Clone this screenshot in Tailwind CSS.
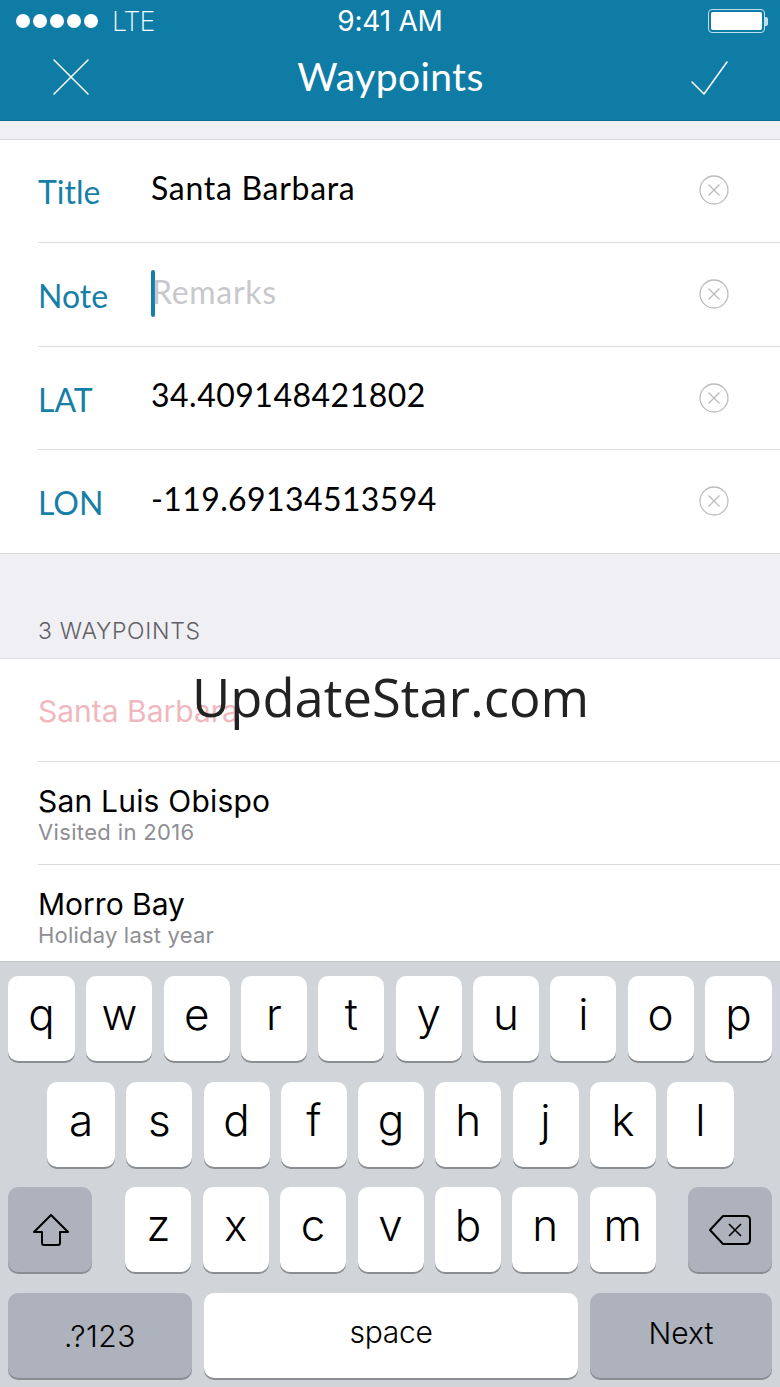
<!DOCTYPE html>
<html>
<head>
<meta charset="utf-8">
<script src="https://cdn.jsdelivr.net/npm/@tailwindcss/browser@4"></script>
</head>
<body class="m-0">
<div class="relative w-[780px] h-[1387px] overflow-hidden flex flex-col bg-[#efeff4] font-['Lato',sans-serif]">
  <!-- header -->
  <header class="h-[121px] shrink-0 bg-[#0f7ca6] text-white flex flex-col border-b border-[#0c6f96]">
    <div class="h-[42px] relative flex items-center justify-between pl-[16px] pr-[12px] font-['Inter',sans-serif]">
      <div class="flex items-center gap-[3px]">
        <span class="w-[14px] h-[14px] rounded-full bg-white"></span>
        <span class="w-[14px] h-[14px] rounded-full bg-white"></span>
        <span class="w-[14px] h-[14px] rounded-full bg-white"></span>
        <span class="w-[14px] h-[14px] rounded-full bg-white"></span>
        <span class="w-[14px] h-[14px] rounded-full bg-white"></span>
        <span class="ml-[11px] text-[27px] font-extralight leading-none tracking-[-1px]">LTE</span>
      </div>
      <span class="absolute left-0 right-0 text-center text-[28px] font-normal leading-none tracking-[-0.2px]">9:41 AM</span>
      <div class="flex items-center">
        <div class="w-[57px] h-[24px] rounded-[4px] border border-[#bfe0ee] p-[2px]"><div class="w-full h-full rounded-[2px] bg-white"></div></div>
        <div class="w-[3px] h-[9px] rounded-r-[2px] bg-[#bfe0ee]"></div>
      </div>
    </div>
    <div class="flex-1 flex items-center justify-between pl-[52px] pr-[51px] pb-[9px]">
      <svg class="w-[38px] h-[38px]" viewBox="0 0 38 38" fill="none" stroke="white" stroke-width="1.5" stroke-linecap="round"><path d="M2 2 L36 36 M36 2 L2 36"/></svg>
      <span class="text-[39px] leading-none font-['Lato',sans-serif] tracking-[0.4px]">Waypoints</span>
      <svg class="w-[38px] h-[36px] mt-[4px]" viewBox="0 0 38 36" fill="none" stroke="white" stroke-width="1.5" stroke-linecap="round" stroke-linejoin="round"><path d="M1 21 L13 33 L36 1"/></svg>
    </div>
  </header>

  <div class="h-[18px] shrink-0"></div>

  <!-- form -->
  <section class="shrink-0 bg-white border-y border-[#d9d9dc] pl-[38px]">
    <div class="h-[103px] flex items-center border-b border-[#dcdcdf] pr-[51px]">
      <span class="w-[113px] text-[32px] text-[#167fa8] leading-none pt-[1px]">Title</span>
      <span class="flex-1 text-[32px] text-black leading-none pb-[7px] tracking-[0.7px]">Santa Barbara</span>
      <svg class="w-[30px] h-[30px] mb-[2px]" viewBox="0 0 30 30" fill="none" stroke="#bcbcbc" stroke-width="1.3"><circle cx="15" cy="15" r="14"/><path d="M9.5 9.5 L20.5 20.5 M20.5 9.5 L9.5 20.5"/></svg>
    </div>
    <div class="h-[104px] flex items-center border-b border-[#dcdcdf] pr-[51px]">
      <span class="w-[113px] text-[32px] text-[#167fa8] leading-none pt-[3px]">Note</span>
      <span class="w-[4px] h-[47px] mt-[-3px] rounded-full bg-[#167fa8]"></span>
      <span class="flex-1 text-[32px] text-[#c8c8cc] leading-none pb-[5px] ml-[-3px] tracking-[0.7px]">Remarks</span>
      <svg class="w-[30px] h-[30px] mb-[2px]" viewBox="0 0 30 30" fill="none" stroke="#bcbcbc" stroke-width="1.3"><circle cx="15" cy="15" r="14"/><path d="M9.5 9.5 L20.5 20.5 M20.5 9.5 L9.5 20.5"/></svg>
    </div>
    <div class="h-[103px] flex items-center border-b border-[#dcdcdf] pr-[51px]">
      <span class="w-[113px] text-[32px] text-[#167fa8] leading-none pt-[3px]">LAT</span>
      <span class="flex-1 text-[32px] text-black leading-none pb-[6px] tracking-[0.5px]">34.409148421802</span>
      <svg class="w-[30px] h-[30px] mb-[1px]" viewBox="0 0 30 30" fill="none" stroke="#bcbcbc" stroke-width="1.3"><circle cx="15" cy="15" r="14"/><path d="M9.5 9.5 L20.5 20.5 M20.5 9.5 L9.5 20.5"/></svg>
    </div>
    <div class="h-[103px] flex items-center pr-[51px]">
      <span class="w-[113px] text-[32px] text-[#167fa8] leading-none pt-[3px]">LON</span>
      <span class="flex-1 text-[32px] text-black leading-none pb-[5px] tracking-[0.4px]">-119.69134513594</span>
      <svg class="w-[30px] h-[30px] mb-[1px]" viewBox="0 0 30 30" fill="none" stroke="#bcbcbc" stroke-width="1.3"><circle cx="15" cy="15" r="14"/><path d="M9.5 9.5 L20.5 20.5 M20.5 9.5 L9.5 20.5"/></svg>
    </div>
  </section>

  <!-- section label -->
  <div class="h-[104px] shrink-0 flex items-end pl-[38px] pb-[15px] font-['Inter',sans-serif] font-light text-[23px] leading-none tracking-[0.7px] text-[#5f5f65]">3 WAYPOINTS</div>

  <!-- list -->
  <section class="flex-1 bg-white border-t border-[#dcdcdf] pl-[38px] font-['Inter',sans-serif]">
    <div class="h-[103px] flex items-center border-b border-[#dcdcdf]">
      <span class="text-[30px] leading-none text-[#f0b7c0] pt-[2px]">Santa Barbara</span>
    </div>
    <div class="h-[103px] flex flex-col justify-center border-b border-[#dcdcdf] pt-[1px]">
      <span class="text-[30px] leading-[36px] text-black tracking-[0.2px]">San Luis Obispo</span>
      <span class="text-[22px] leading-[26px] text-[#8e8e93] tracking-[0.35px]">Visited in 2016</span>
    </div>
    <div class="h-[94px] flex flex-col justify-start pt-[21px]">
      <span class="text-[30px] leading-[36px] text-black">Morro Bay</span>
      <span class="text-[22px] leading-[27px] text-[#8e8e93] tracking-[0.2px]">Holiday last year</span>
    </div>
  </section>

  <!-- keyboard -->
  <section class="h-[426px] shrink-0 bg-[#d1d5da] border-t border-[#c4c7cc] pt-[14px] px-[8px] flex flex-col gap-[20.6px] font-['Inter',sans-serif] text-black">
    <div class="flex justify-between h-[85px]">
      <div class="w-[67px] rounded-[10px] bg-white shadow-[0_2px_0_#8a8d92] flex items-center justify-center text-[44px] font-light leading-none pb-[9px]">q</div>
      <div class="w-[66px] rounded-[10px] bg-white shadow-[0_2px_0_#8a8d92] flex items-center justify-center text-[44px] font-light leading-none pb-[9px]">w</div>
      <div class="w-[66px] rounded-[10px] bg-white shadow-[0_2px_0_#8a8d92] flex items-center justify-center text-[44px] font-light leading-none pb-[9px]">e</div>
      <div class="w-[66px] rounded-[10px] bg-white shadow-[0_2px_0_#8a8d92] flex items-center justify-center text-[44px] font-light leading-none pb-[9px]">r</div>
      <div class="w-[66px] rounded-[10px] bg-white shadow-[0_2px_0_#8a8d92] flex items-center justify-center text-[44px] font-light leading-none pb-[9px]">t</div>
      <div class="w-[66px] rounded-[10px] bg-white shadow-[0_2px_0_#8a8d92] flex items-center justify-center text-[44px] font-light leading-none pb-[9px]">y</div>
      <div class="w-[66px] rounded-[10px] bg-white shadow-[0_2px_0_#8a8d92] flex items-center justify-center text-[44px] font-light leading-none pb-[9px]">u</div>
      <div class="w-[66px] rounded-[10px] bg-white shadow-[0_2px_0_#8a8d92] flex items-center justify-center text-[44px] font-light leading-none pb-[9px]">i</div>
      <div class="w-[66px] rounded-[10px] bg-white shadow-[0_2px_0_#8a8d92] flex items-center justify-center text-[44px] font-light leading-none pb-[9px]">o</div>
      <div class="w-[67px] rounded-[10px] bg-white shadow-[0_2px_0_#8a8d92] flex items-center justify-center text-[44px] font-light leading-none pb-[9px]">p</div>
    </div>
    <div class="flex justify-between h-[85px] pl-[39px] pr-[38px]">
      <div class="w-[68px] rounded-[10px] bg-white shadow-[0_2px_0_#8a8d92] flex items-center justify-center text-[44px] font-light leading-none pb-[8px]">a</div>
      <div class="w-[66px] rounded-[10px] bg-white shadow-[0_2px_0_#8a8d92] flex items-center justify-center text-[44px] font-light leading-none pb-[8px]">s</div>
      <div class="w-[66px] rounded-[10px] bg-white shadow-[0_2px_0_#8a8d92] flex items-center justify-center text-[44px] font-light leading-none pb-[8px]">d</div>
      <div class="w-[66px] rounded-[10px] bg-white shadow-[0_2px_0_#8a8d92] flex items-center justify-center text-[44px] font-light leading-none pb-[8px]">f</div>
      <div class="w-[66px] rounded-[10px] bg-white shadow-[0_2px_0_#8a8d92] flex items-center justify-center text-[44px] font-light leading-none pb-[8px]">g</div>
      <div class="w-[66px] rounded-[10px] bg-white shadow-[0_2px_0_#8a8d92] flex items-center justify-center text-[44px] font-light leading-none pb-[8px]">h</div>
      <div class="w-[66px] rounded-[10px] bg-white shadow-[0_2px_0_#8a8d92] flex items-center justify-center text-[44px] font-light leading-none pb-[8px]">j</div>
      <div class="w-[66px] rounded-[10px] bg-white shadow-[0_2px_0_#8a8d92] flex items-center justify-center text-[44px] font-light leading-none pb-[8px]">k</div>
      <div class="w-[67px] rounded-[10px] bg-white shadow-[0_2px_0_#8a8d92] flex items-center justify-center text-[44px] font-light leading-none pb-[8px]">l</div>
    </div>
    <div class="flex justify-between h-[85px]">
      <div class="w-[84px] mr-[22px] rounded-[10px] bg-[#adb2bc] shadow-[0_2px_0_#8a8d92] flex items-center justify-center">
        <svg class="w-[38px] h-[34px] ml-[1px]" viewBox="0 0 38 34" fill="none" stroke="#000" stroke-width="2" stroke-linejoin="round"><path d="M19 2 L36 19 H28 V30 Q28 32 26 32 H12 Q10 32 10 30 V19 H2 Z"/></svg>
      </div>
      <div class="w-[66px] rounded-[10px] bg-white shadow-[0_2px_0_#8a8d92] flex items-center justify-center text-[44px] font-light leading-none pb-[9px]">z</div>
      <div class="w-[66px] rounded-[10px] bg-white shadow-[0_2px_0_#8a8d92] flex items-center justify-center text-[44px] font-light leading-none pb-[9px]">x</div>
      <div class="w-[66px] rounded-[10px] bg-white shadow-[0_2px_0_#8a8d92] flex items-center justify-center text-[44px] font-light leading-none pb-[9px]">c</div>
      <div class="w-[66px] rounded-[10px] bg-white shadow-[0_2px_0_#8a8d92] flex items-center justify-center text-[44px] font-light leading-none pb-[9px]">v</div>
      <div class="w-[66px] rounded-[10px] bg-white shadow-[0_2px_0_#8a8d92] flex items-center justify-center text-[44px] font-light leading-none pb-[9px]">b</div>
      <div class="w-[66px] rounded-[10px] bg-white shadow-[0_2px_0_#8a8d92] flex items-center justify-center text-[44px] font-light leading-none pb-[9px]">n</div>
      <div class="w-[66px] rounded-[10px] bg-white shadow-[0_2px_0_#8a8d92] flex items-center justify-center text-[44px] font-light leading-none pb-[9px]">m</div>
      <div class="w-[84px] ml-[21px] rounded-[10px] bg-[#adb2bc] shadow-[0_2px_0_#8a8d92] flex items-center justify-center">
        <svg class="w-[44px] h-[32px]" viewBox="0 0 44 32" fill="none" stroke="#000" stroke-width="2" stroke-linejoin="round"><path d="M15 2 H38 Q42 2 42 6 V26 Q42 30 38 30 H15 L2 16 Z"/><path d="M21 10 L33 22 M33 10 L21 22" stroke-width="1.6"/></svg>
      </div>
    </div>
    <div class="flex justify-between h-[85px]">
      <div class="w-[184px] rounded-[10px] bg-[#adb2bc] shadow-[0_2px_0_#8a8d92] flex items-center justify-center text-[30px] font-light leading-none pt-[1px] tracking-[0.5px]">.?123</div>
      <div class="w-[374px] rounded-[10px] bg-white shadow-[0_2px_0_#8a8d92] flex items-center justify-center text-[30px] font-light leading-none pb-[6px] tracking-[-0.3px]">space</div>
      <div class="w-[182px] rounded-[10px] bg-[#adb2bc] shadow-[0_2px_0_#8a8d92] flex items-center justify-center text-[30px] font-light leading-none pb-[5px]">Next</div>
    </div>
  </section>

  <!-- watermark -->
  <div class="absolute left-[192px] top-[659px] text-[52.5px] leading-[76px] text-[#222] font-['Open_Sans',sans-serif]">UpdateStar.com</div>
</div>
</body>
</html>
